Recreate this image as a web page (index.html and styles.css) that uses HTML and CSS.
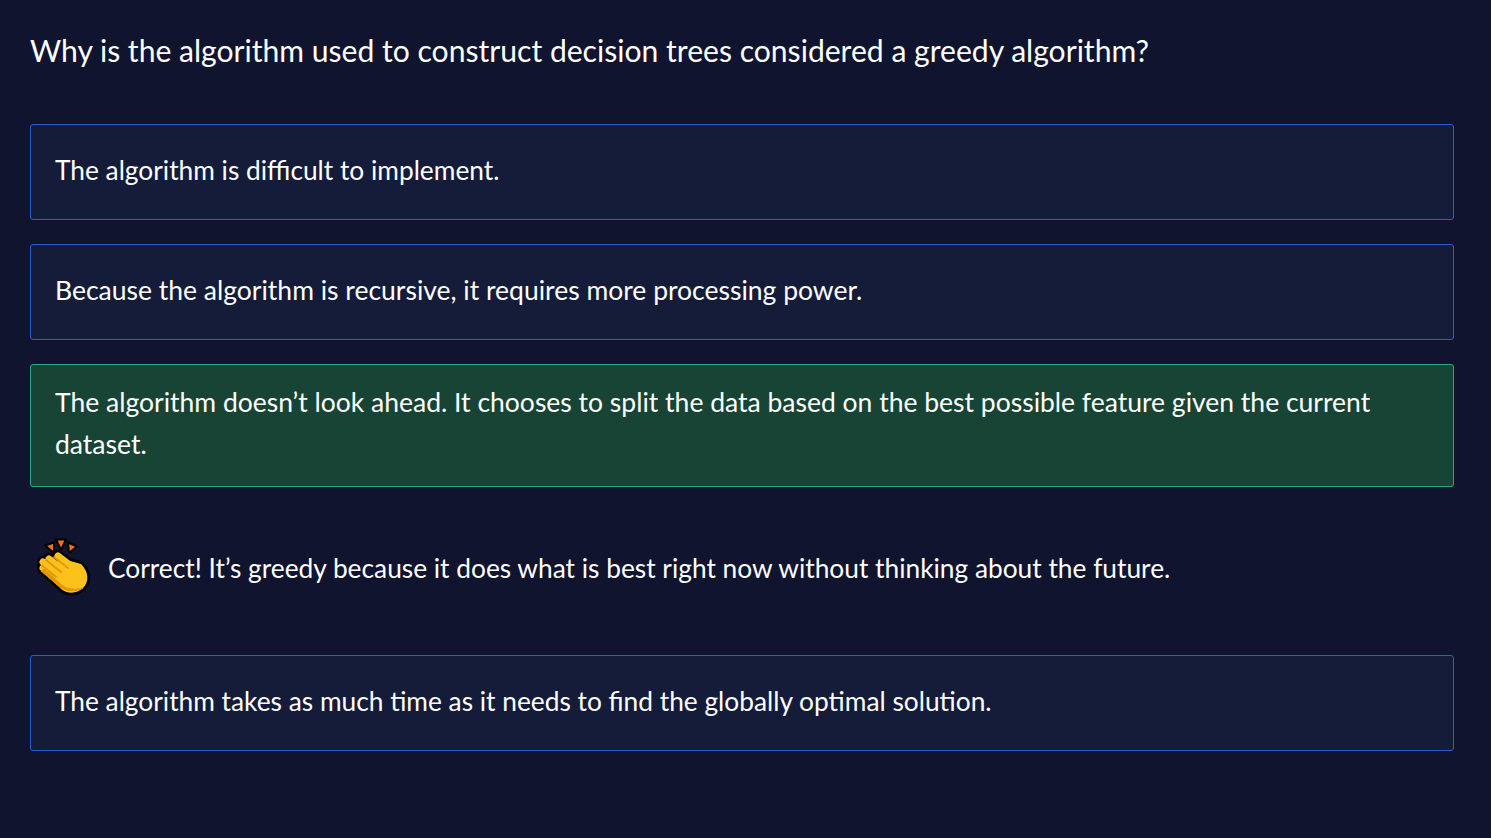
FILE: index.html

```html
<!DOCTYPE html>
<html lang="en">
<head>
    <meta charset="UTF-8">
    <title>Decision trees quiz</title>
    <link rel="stylesheet" href="styles.css">
</head>
<body>
    <div class="quiz">
        <h2 class="question">Why is the algorithm used to construct decision trees considered a greedy algorithm?</h2>
        <div class="options">
            <div class="option">The algorithm is difficult to implement.</div>
            <div class="option wide">Because the algorithm is recursive, it requires more processing power.</div>
            <div class="option correct wide">The algorithm doesn’t look ahead. It chooses to split the data based on the best possible feature given the current dataset.</div>
            <div class="feedback">
                <svg class="clap" viewBox="4 3 56 60" aria-hidden="true">
                    <!-- sparks -->
                    <g fill="#f4701f" stroke="#000" stroke-width="2" stroke-linejoin="round">
                        <path d="M13 10.500 L22 7.500 L22 18 Z"/>
                        <path d="M24 4.500 L34 4.500 L29 15 Z"/>
                        <path d="M36 7.500 L45 11.500 L37 18 Z"/>
                    </g>
                    <!-- outline -->
                    <path d="M11 33 L30 50 M11 27 L33 45 M17 24 L39 41 M26 21 L48 38" fill="none" stroke="#000" stroke-width="12" stroke-linecap="round"/>
                    <path d="M14 32 L31 24 L49 29 C56 36 58 46 51 53 C45 59 35 59 29 54 Z" fill="#000" stroke="#000" stroke-width="5.500" stroke-linejoin="round"/>
                    <!-- hand -->
                    <path d="M11 33 L30 50 M11 27 L33 45 M17 24 L39 41 M26 21 L48 38" fill="none" stroke="#fcc21b" stroke-width="7" stroke-linecap="round"/>
                    <path d="M14 32 L31 24 L49 29 C56 36 58 46 51 53 C45 59 35 59 29 54 Z" fill="#fcc21b"/>
                    <!-- finger gaps and shadow -->
                    <path d="M9 36 L29 52.500 C35 56 43 57 51 53 C44 55 37 55 31 51 L12 34 Z" fill="#e59600" stroke="#e59600" stroke-linejoin="round"/>
                    <path d="M22 22 L36 33 M14 25 L29 37 M10 30.500 L24 42" fill="none" stroke="#e59600" stroke-width="1.800" stroke-linecap="round"/>
                </svg>
                <p>Correct! It’s greedy because it does what is best right now without thinking about the future.</p>
            </div>
            <div class="option">The algorithm takes as much time as it needs to find the globally optimal solution.</div>
        </div>
    </div>
</body>
</html>
```

FILE: styles.css

```css
* {
    box-sizing: border-box;
}
html, body {
    height: 100%;
}
body {
    margin: 0;
    background: #10142f;
    color: #fff;
    font-family: "Lato", "Liberation Sans", sans-serif;
}
.quiz {
    padding: 29px 37px 0 30px;
}
.question {
    margin: 0 0 53px;
    font-size: 30.1px;
    font-weight: 400;
    line-height: 42px;
}
.options {
    display: flex;
    flex-direction: column;
    gap: 24px;
}
.option {
    display: flex;
    align-items: center;
    min-height: 96px;
    padding: 16px 24px 21px;
    font-size: 26.3px;
    line-height: 42px;
    background: #141c3a;
    border: 1px solid #2d5bd0;
    border-radius: 3px;
}
.option.wide {
    font-size: 26.5px;
}
.option.correct {
    background: #184435;
    border-color: #2fa878;
}
.feedback {
    display: flex;
    align-items: center;
    gap: 16px;
    margin: 27px 0 33px 6px;
    height: 60px;
    font-size: 26.3px;
}
.feedback p {
    margin: 0;
}
.clap {
    width: 56px;
    height: 60px;
    flex-shrink: 0;
}
```
